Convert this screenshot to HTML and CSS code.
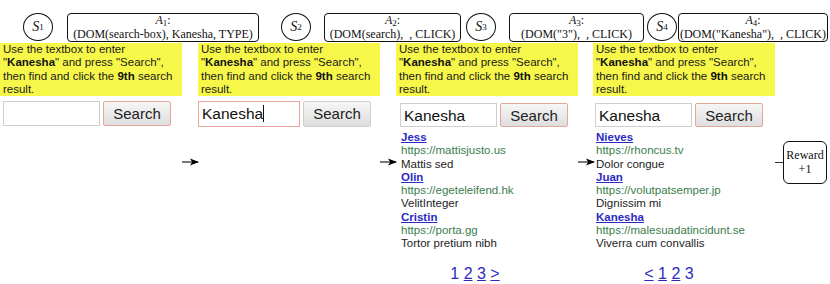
FILE: index.html
```html
<!DOCTYPE html>
<html lang="en">
<head>
    <meta charset="UTF-8">
    <meta name="viewport" content="width=device-width, initial-scale=1.0">
    <title>Search episode</title>
    <link rel="stylesheet" href="styles.css">
</head>
<body>
    <!-- states and actions along the top -->
    <div class="labels">
        <div class="state s1"><i>S</i><sub>1</sub></div>
        <div class="action a1"><div><i>A</i><sub>1</sub>:</div><div>(DOM(search-box), Kanesha, TYPE)</div></div>
        <div class="state s2"><i>S</i><sub>2</sub></div>
        <div class="action a2"><div><i>A</i><sub>2</sub>:</div><div>(DOM(search), &nbsp;, CLICK)</div></div>
        <div class="state s3"><i>S</i><sub>3</sub></div>
        <div class="action a3"><div><i>A</i><sub>3</sub>:</div><div>(DOM("3"), &nbsp;, CLICK)</div></div>
        <div class="state s4"><i>S</i><sub>4</sub></div>
        <div class="action a4"><div><i>A</i><sub>4</sub>:</div><div>(DOM("Kanesha"), &nbsp;, CLICK)</div></div>
    </div>

    <div class="steps">
        <!-- step 1 -->
        <div class="step">
            <div class="task">Use the textbox to enter "<b>Kanesha</b>" and press "Search", then find and click the <b>9th</b> search result.</div>
            <div class="search-bar">
                <div class="field"></div>
                <div class="btn hot">Search</div>
            </div>
        </div>
        <div class="arrow"><svg width="18" height="8" viewBox="0 0 18 8"><line x1="0" y1="4" x2="16" y2="4" stroke="#222" stroke-width="1.2"/><path d="M17 4 L8 0.6 L10.2 4 L8 7.4 Z" fill="#000"/></svg></div>

        <!-- step 2 -->
        <div class="step typed">
            <div class="task">Use the textbox to enter "<b>Kanesha</b>" and press "Search", then find and click the <b>9th</b> search result.</div>
            <div class="search-bar">
                <div class="field focus">Kanesha<span class="caret"></span></div>
                <div class="btn">Search</div>
            </div>
        </div>
        <div class="arrow"><svg width="18" height="8" viewBox="0 0 18 8"><line x1="0" y1="4" x2="16" y2="4" stroke="#222" stroke-width="1.2"/><path d="M17 4 L8 0.6 L10.2 4 L8 7.4 Z" fill="#000"/></svg></div>

        <!-- step 3 -->
        <div class="step late">
            <div class="task">Use the textbox to enter "<b>Kanesha</b>" and press "Search", then find and click the <b>9th</b> search result.</div>
            <div class="search-bar">
                <div class="field">Kanesha</div>
                <div class="btn hot">Search</div>
            </div>
            <div class="results">
                <a class="title">Jess</a>
                <div class="url">https://mattisjusto.us</div>
                <div class="desc">Mattis sed</div>
                <a class="title">Olin</a>
                <div class="url">https://egeteleifend.hk</div>
                <div class="desc">VelitInteger</div>
                <a class="title">Cristin</a>
                <div class="url">https://porta.gg</div>
                <div class="desc">Tortor pretium nibh</div>
            </div>
            <div class="pages"><span class="cur">1</span> <a>2</a> <a>3</a> <a>&gt;</a></div>
        </div>
        <div class="arrow narrow"><svg width="18" height="8" viewBox="0 0 18 8"><line x1="0" y1="4" x2="16" y2="4" stroke="#222" stroke-width="1.2"/><path d="M17 4 L8 0.6 L10.2 4 L8 7.4 Z" fill="#000"/></svg></div>

        <!-- step 4 -->
        <div class="step late last">
            <div class="task">Use the textbox to enter "<b>Kanesha</b>" and press "Search", then find and click the <b>9th</b> search result.</div>
            <div class="search-bar">
                <div class="field">Kanesha</div>
                <div class="btn hot">Search</div>
            </div>
            <div class="results">
                <a class="title">Nieves</a>
                <div class="url">https://rhoncus.tv</div>
                <div class="desc">Dolor congue</div>
                <a class="title">Juan</a>
                <div class="url">https://volutpatsemper.jp</div>
                <div class="desc">Dignissim mi</div>
                <a class="title">Kanesha</a>
                <div class="url">https://malesuadatincidunt.se</div>
                <div class="desc">Viverra cum convallis</div>
            </div>
            <div class="pages"><a>&lt;</a> <a>1</a> <a>2</a> <span class="cur">3</span></div>
        </div>

        <div class="link"></div>
        <div class="reward">Reward<br>+1</div>
    </div>
</body>
</html>
```

FILE: styles.css
```css
body { margin: 0; background: #fff; font-family: "Liberation Sans", Arial, sans-serif; color: #222; }

/* top row: state circles and action boxes */
.labels { display: flex; align-items: flex-end; height: 43px; padding-bottom: 1px; box-sizing: border-box; font-family: "Liberation Serif", "Times New Roman", serif; color: #111; }
.state { box-sizing: border-box; width: 30px; height: 28px; margin-bottom: 1px; border: 1px solid #111; border-radius: 50%; display: flex; align-items: center; justify-content: center; font-size: 14px; }
.state sub, .action sub { font-size: 9px; font-style: normal; vertical-align: -2px; line-height: 0; }
.action { box-sizing: border-box; height: 29px; border: 1px solid #111; border-radius: 4px; text-align: center; font-size: 12px; line-height: 13.5px; white-space: nowrap; }
.s1 { margin-left: 23px; }
.a1 { margin-left: 14px; width: 192px; }
.s2 { margin-left: 22px; }
.a2 { margin-left: 13px; width: 137px; }
.s3 { margin-left: 5px; }
.a3 { margin-left: 13px; width: 135px; }
.s4 { margin-left: 3px; }
.a4 { margin-left: 1px; width: 150px; }

/* screenshots of each step */
.steps { display: flex; align-items: flex-start; }
.step { width: 182px; flex: none; }
.task { background: #f7f74a; height: 53px; padding: 0 3px; box-sizing: border-box; font-size: 11.5px; line-height: 13.25px; color: #1a1a1a; }
.task b { color: #111; }

.search-bar { display: flex; gap: 3px; margin: 5px 0 0 3px; height: 25px; }
.typed .search-bar { margin-left: 0; margin-top: 5px; height: 26px; }
.late .search-bar { margin-top: 7px; margin-left: 4px; height: 24px; }
.last .search-bar { margin-left: 2px; }
.field { box-sizing: border-box; width: 97px; border: 1px solid #cfcfcf; font-size: 15.5px; line-height: 23px; padding-left: 3px; color: #111; }
.field.focus { width: 102px; border-color: #e6a798; }
.caret { display: inline-block; width: 1px; height: 17px; background: #111; vertical-align: -3px; }
.btn { box-sizing: border-box; width: 68px; border: 1px solid #cfcfcf; border-radius: 2px; background: linear-gradient(#f6f6f6, #dedede); font-size: 15px; line-height: 23px; text-align: center; color: #222; }
.btn.hot { border-color: #e3a898; }

.results { margin: 4px 0 0 5px; font-size: 11.5px; line-height: 13.3px; }
.last .results { margin-left: 3px; }
.results .title { display: block; color: #2b2bc4; font-weight: bold; text-decoration: underline; }
.results .url { color: #3b7d4c; }
.results .desc { color: #1d1d1d; }

.pages { width: 158px; margin-top: 14px; text-align: center; font-size: 16px; line-height: 18px; color: #2b2bc4; }
.last .pages { width: 152px; }
.pages a { text-decoration: underline; }

.arrow { width: 16px; flex: none; padding-top: 115px; }
.arrow svg { display: block; }
.arrow.narrow { width: 15px; }

.link { width: 8px; height: 1px; background: #333; margin-top: 119px; flex: none; }
.reward { box-sizing: border-box; width: 44px; height: 43px; margin-top: 98px; border: 1.3px solid #111; border-radius: 6px; font-family: "Liberation Serif", "Times New Roman", serif; font-size: 12px; line-height: 14px; text-align: center; padding-top: 6px; color: #111; }
```
